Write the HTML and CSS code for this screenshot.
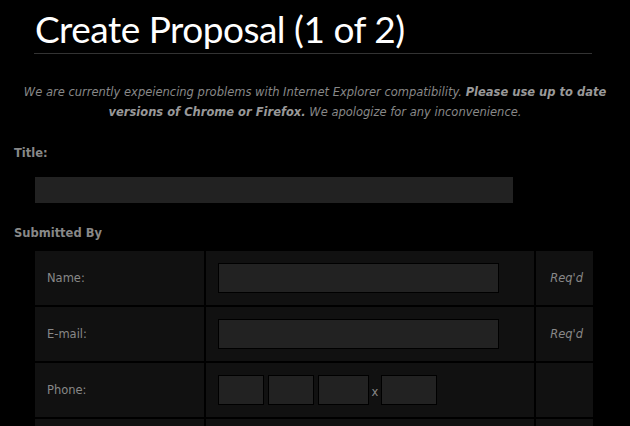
FILE: index.html
```html
<!DOCTYPE html>
<html lang="en">
<head>
    <meta charset="UTF-8">
    <title>Create Proposal</title>
    <link rel="stylesheet" href="styles.css">
</head>
<body>

<!-- page heading -->
<div class="header">
    <h1>Create Proposal (1 of 2)</h1>
</div>

<p class="notice">
    We are currently expeiencing problems with Internet Explorer compatibility.
    <b>Please use up to date versions of Chrome or Firefox.</b>
    We apologize for any inconvenience.
</p>

<form class="proposal-form">
    <label class="section-label">Title:</label>
    <div class="title-row">
        <input type="text" class="title-input">
    </div>

    <label class="section-label">Submitted By</label>
    <table class="fields">
        <tr>
            <td class="field-name">Name:</td>
            <td class="field-value"><input type="text" class="wide-input"></td>
            <td class="field-req">Req'd</td>
        </tr>
        <tr>
            <td class="field-name">E-mail:</td>
            <td class="field-value"><input type="text" class="wide-input"></td>
            <td class="field-req">Req'd</td>
        </tr>
        <tr>
            <td class="field-name">Phone:</td>
            <td class="field-value phone">
                <input type="text" class="ph ph-area">
                <input type="text" class="ph ph-pre">
                <input type="text" class="ph ph-line">
                <span class="ext">x</span>
                <input type="text" class="ph ph-ext">
            </td>
            <td class="field-req"></td>
        </tr>
        <tr>
            <td class="field-name">&nbsp;</td>
            <td class="field-value"></td>
            <td class="field-req"></td>
        </tr>
    </table>
</form>

</body>
</html>
```

FILE: styles.css
```css
html, body {
    margin: 0;
    padding: 0;
    background: #000;
}

body {
    font-family: "DejaVu Sans", Verdana, sans-serif;
    font-size: 11.5px;
    color: #888;
}

/* heading */
.header {
    width: 558px;
    margin-left: 34px;
    border-bottom: 1px solid #333;
}

h1 {
    margin: 0;
    padding: 8px 0 3px 1px;
    font-family: Lato, "Open Sans", sans-serif;
    font-weight: normal;
    font-size: 37px;
    letter-spacing: -0.5px;
    line-height: 42px;
    color: #fff;
}

.notice {
    margin: 28px 0 0;
    padding: 0 18px;
    text-align: center;
    font-style: italic;
    font-size: 11.5px;
    line-height: 20px;
    color: #888;
}

.notice b {
    color: #999;
}

/* form */
.proposal-form {
    padding: 0 0 0 14px;
    margin-top: 23px;
}

.section-label {
    display: block;
    font-weight: bold;
    font-size: 11.5px;
    line-height: 16px;
    color: #888;
}

.title-row {
    padding: 16px 0 22px 21px;
}

.title-input {
    display: block;
    width: 478px;
    height: 26px;
    box-sizing: border-box;
    border: none;
    background: #222;
}

.fields {
    margin: 9px 0 0 21px;
    width: 558px;
    border-collapse: collapse;
    background: #111;
}

.fields td {
    border: 2px solid #000;
    height: 54px;
    padding: 0;
    vertical-align: middle;
}

.fields tr:first-child td {
    border-top: 1px solid #000;
}

.fields td:first-child {
    border-left: none;
}

.fields td:last-child {
    border-right: none;
}

.field-name {
    width: 157px;
    padding-left: 12px !important;
}

.field-value {
    width: 316px;
    padding-left: 12px !important;
}

.field-req {
    text-align: right;
    padding-right: 10px !important;
    font-style: italic;
}

.wide-input {
    display: block;
    width: 281px;
    height: 30px;
    box-sizing: border-box;
    border: 1px solid #000;
    background: #222;
}

.phone {
    font-size: 0;
}

.ph {
    display: inline-block;
    vertical-align: middle;
    height: 30px;
    box-sizing: border-box;
    border: 1px solid #000;
    background: #222;
    margin-right: 4px;
}

.ph-area, .ph-pre {
    width: 46px;
}

.ph-line {
    width: 51px;
    margin-right: 0;
}

.ph-ext {
    width: 56px;
}

.ext {
    display: inline-block;
    vertical-align: middle;
    font-size: 11.5px;
    width: 12px;
    text-align: center;
    margin-top: 3px;
}
```
